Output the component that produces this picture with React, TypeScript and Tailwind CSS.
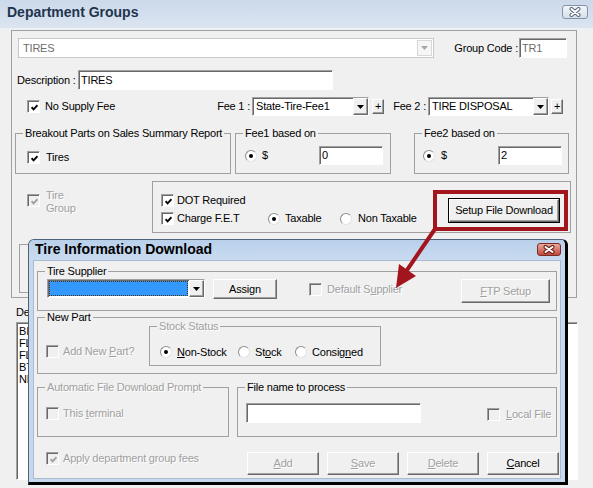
import React from 'react';

const sunken =
  'border border-t-[#a0a0a0] border-l-[#a0a0a0] border-r-white border-b-white shadow-[inset_1px_1px_0_#696969]';
const raised =
  'border border-t-white border-l-white border-r-[#696969] border-b-[#696969] shadow-[inset_-1px_-1px_0_#a0a0a0] bg-[#f0f0f0]';
const dim = 'text-[#a0a0a0] [text-shadow:1px_1px_0_#ffffff]';
const red = '#a3151d';

function Tick({ color }: { color: string }) {
  return (
    <svg width="7" height="7" viewBox="0 0 7 7">
      <path d="M0.6 3.2L2.6 5.3L6.5 1.2" stroke={color} strokeWidth="1.9" fill="none" />
    </svg>
  );
}

function Check({ checked, disabled }: { checked?: boolean; disabled?: boolean }) {
  return (
    <span
      className={`flex h-[13px] w-[13px] shrink-0 items-center justify-center pl-[1px] pt-[1px] ${sunken} ${
        disabled ? 'bg-[#f0f0f0]' : 'bg-white'
      }`}
    >
      {checked && <Tick color={disabled ? '#a0a0a0' : '#000'} />}
    </span>
  );
}

function Radio({ on }: { on?: boolean }) {
  return (
    <span className="flex h-[12px] w-[12px] shrink-0 items-center justify-center rounded-full border border-[#8c8c8c] border-r-[#e2e2e2] border-b-[#e2e2e2] bg-white">
      {on && <span className="h-[4px] w-[4px] rounded-full bg-black" />}
    </span>
  );
}

function Tri({ color }: { color: string }) {
  return (
    <svg width="7" height="4" viewBox="0 0 7 4">
      <polygon points="0,0 7,0 3.5,4" fill={color} />
    </svg>
  );
}

function Combo({ text, className = '' }: { text: string; className?: string }) {
  return (
    <div className={`flex h-[19px] bg-white ${sunken} ${className}`}>
      <span className="flex-1 overflow-hidden whitespace-nowrap pl-[3px] leading-[17px]">{text}</span>
      <span className={`flex w-[15px] items-center justify-center ${raised}`}>
        <Tri color="#000" />
      </span>
    </div>
  );
}

function Plus({ className = '' }: { className?: string }) {
  return (
    <span className={`flex h-[15px] w-[12px] items-center justify-center leading-[13px] ${raised} ${className}`}>+</span>
  );
}

function Btn({
  children,
  className = '',
  disabled,
}: {
  children: React.ReactNode;
  className?: string;
  disabled?: boolean;
}) {
  return (
    <div className={`flex items-center justify-center ${raised} ${disabled ? dim : ''} ${className}`}>{children}</div>
  );
}

function Group({
  label,
  dimLabel,
  className = '',
  children,
}: {
  label?: string;
  dimLabel?: boolean;
  className?: string;
  children?: React.ReactNode;
}) {
  return (
    <fieldset className={`border border-[#a0a0a0] ${className}`}>
      {label && <legend className={`ml-[7px] px-[2px] leading-[13px] ${dimLabel ? dim : ''}`}>{label}</legend>}
      {children}
    </fieldset>
  );
}

function XGlyph({ edge, w = 14, h = 10 }: { edge: string; w?: number; h?: number }) {
  const d = `M3.5 2L${w - 3.5} ${h - 2}M${w - 3.5} 2L3.5 ${h - 2}`;
  return (
    <svg width={w} height={h} viewBox={`0 0 ${w} ${h}`}>
      <path d={d} stroke={edge} strokeWidth="4" strokeLinecap="round" />
      <path d={d} stroke="#ffffff" strokeWidth="2" strokeLinecap="round" />
    </svg>
  );
}

const U = ({ children }: { children: React.ReactNode }) => <span className="underline">{children}</span>;

// only the first letters peek out from under the download window
const listItems = ['BIG O TIRES', 'FLAT REPAIR', 'FLEET TIRES', 'BTR TUBES', 'NEW TIRES'];

export default function App() {
  return (
    <div className="relative h-[488px] w-[593px] overflow-hidden bg-[#f0f0f0] font-['Liberation_Sans',Arial,sans-serif] text-[11px] leading-[13px] tracking-[-0.2px] text-black">
      {/* title bar */}
      <div className="flex h-[28px] items-start justify-between bg-gradient-to-b from-[#ccd9ea] to-[#dbe5f1] pl-[7px] pr-[5px]">
        <span className="pt-[4px] text-[14px] font-bold leading-[16px] tracking-normal text-[#1f344e]">
          Department Groups
        </span>
        <span className="mt-[5px] flex h-[14px] w-[26px] items-center justify-center rounded-[3px] border border-[#8494a7] bg-gradient-to-b from-[#f3f6fa] to-[#d6dfe9]">
          <XGlyph edge="#5a6776" />
        </span>
      </div>

      {/* main panel */}
      <div className="ml-[11px] mt-[2px] h-[268px] w-[566px] border border-[#a0a0a0]">
        <div className="mt-[7px] flex h-[20px] items-center">
          <div className="ml-[6px] flex h-[20px] w-[416px] border border-[#c8c8c8] bg-white">
            <span className="flex-1 pl-[4px] leading-[18px] text-[#6d6d6d]">TIRES</span>
            <span className="m-[1px] flex w-[15px] items-center justify-center border border-[#d8d8d8] bg-[#f6f6f6]">
              <Tri color="#a8a8a8" />
            </span>
          </div>
          <span className="w-[85px] whitespace-nowrap pr-[1px] text-right">Group Code :</span>
          <div className={`h-[20px] w-[48px] bg-white pl-[2px] leading-[18px] text-[#6d6d6d] ${sunken}`}>TR1</div>
        </div>

        <div className="mt-[12px] flex h-[20px] items-center">
          <span className="ml-[5px] w-[61px] whitespace-nowrap">Description :</span>
          <div className={`h-[20px] w-[255px] bg-white pl-[2px] leading-[18px] ${sunken}`}>TIRES</div>
        </div>

        <div className="mt-[7px] flex h-[19px] items-center">
          <div className="flex w-[188px] items-center pl-[15px]">
            <Check checked />
            <span className="ml-[5px]">No Supply Fee</span>
          </div>
          <span className="w-[50px] whitespace-nowrap text-right">Fee 1 :</span>
          <Combo className="ml-[2px] w-[117px]" text="State-Tire-Fee1" />
          <Plus className="ml-[3px]" />
          <span className="w-[42px] whitespace-nowrap text-right">Fee 2 :</span>
          <Combo className="ml-[2px] w-[121px]" text="TIRE DISPOSAL" />
          <Plus className="ml-[2px]" />
        </div>

        <div className="mt-[11px] flex h-[47px]">
          <Group label="Breakout Parts on Sales Summary Report" className="ml-[3px] h-[47px] w-[216px]">
            <div className="mt-[11px] flex items-center pl-[11px]">
              <Check checked />
              <span className="ml-[6px]">Tires</span>
            </div>
          </Group>
          <Group label="Fee1 based on" className="ml-[4px] h-[47px] w-[156px]">
            <div className="mt-[6px] flex h-[19px] items-center pl-[9px] pr-[7px]">
              <Radio on />
              <span className="ml-[5px]">$</span>
              <div className={`ml-auto h-[19px] w-[64px] bg-white pl-[2px] leading-[17px] ${sunken}`}>0</div>
            </div>
          </Group>
          <Group label="Fee2 based on" className="ml-[23px] h-[47px] w-[155px]">
            <div className="mt-[6px] flex h-[19px] items-center pl-[8px] pr-[6px]">
              <Radio on />
              <span className="ml-[6px]">$</span>
              <div className={`ml-auto h-[19px] w-[64px] bg-white pl-[2px] leading-[17px] ${sunken}`}>2</div>
            </div>
          </Group>
        </div>

        <div className="mt-[7px] flex h-[52px]">
          <div className="flex w-[140px] items-start pl-[15px]">
            <span className="mt-[13px]">
              <Check checked disabled />
            </span>
            <span className={`ml-[6px] mt-[8px] ${dim}`}>
              Tire
              <br />
              Group
            </span>
          </div>
          <div className="flex h-[52px] w-[419px] border border-[#a0a0a0]">
            <div className="pl-[8px] pt-[12px]">
              <div className="flex h-[13px] items-center">
                <Check checked />
                <span className="ml-[3px]">DOT Required</span>
              </div>
              <div className="mt-[5px] flex h-[13px] items-center">
                <div className="flex w-[107px] items-center">
                  <Check checked />
                  <span className="ml-[3px]">Charge F.E.T</span>
                </div>
                <div className="flex w-[72px] items-center">
                  <Radio on />
                  <span className="ml-[5px]">Taxable</span>
                </div>
                <div className="flex items-center">
                  <Radio />
                  <span className="ml-[6px] whitespace-nowrap">Non Taxable</span>
                </div>
              </div>
            </div>
            <div className="ml-auto mr-[10px] mt-[16px] h-[25px] w-[112px] border border-black">
              <Btn className="h-full w-full">Setup File Download</Btn>
            </div>
          </div>
        </div>

        <div className="ml-[7px] mt-[11px] h-[49px] w-[545px] border border-[#a0a0a0]" />
      </div>

      <div className="ml-[16px] mt-[8px] w-[12px] overflow-hidden whitespace-nowrap">Departments</div>
      <div className={`ml-[16px] mt-[3px] h-[158px] w-[562px] bg-white pl-[2px] pt-[2px] leading-[12px] ${sunken}`}>
        <div className="w-[9px] overflow-hidden whitespace-nowrap">
          {listItems.map((item) => (
            <div key={item}>{item}</div>
          ))}
        </div>
      </div>

      {/* annotation box */}
      <div className="absolute left-[433px] top-[190px] h-[41px] w-[135px] border-4 border-[#a3151d]" />

      {/* Tire Information Download window */}
      <div className="absolute left-[28px] top-[239px] flex h-[246px] w-[540px] flex-col rounded-t-[6px] border-l border-t border-l-[#4e6079] border-t-[#4e6079] border-r-[3px] border-b-[3px] border-r-black border-b-black bg-[#c5d8ee]">
        <div className="flex h-[20px] shrink-0 items-start justify-between rounded-t-[5px] bg-gradient-to-b from-[#b9d0eb] to-[#c9dbf0] pl-[6px] pr-[4px]">
          <span className="pt-[1px] text-[14px] font-bold leading-[16px] tracking-normal">Tire Information Download</span>
          <span className="mt-[3px] flex h-[13px] w-[24px] items-center justify-center rounded-[3px] border border-[#7a2c25] bg-gradient-to-b from-[#e8a99c] to-[#c2463a]">
            <XGlyph edge="#6b211b" w={14} h={9} />
          </span>
        </div>
        <div className="mx-[4px] mb-[3px] flex-1 border border-[#a9bbd1] bg-[#f0f0f0]">
          <Group label="Tire Supplier" className="ml-[3px] mt-[4px] h-[46px] w-[520px]">
            <div className="flex items-start pl-[9px]">
              <div className={`mt-[1px] flex h-[19px] w-[158px] bg-white ${sunken}`}>
                <span className="m-[1px] flex-1 border border-dotted border-[#4a3414] bg-[#3399ff]" />
                <span className={`flex w-[15px] items-center justify-center ${raised}`}>
                  <Tri color="#000" />
                </span>
              </div>
              <Btn className="ml-[8px] mt-[1px] h-[20px] w-[64px]">
                Assi<U>g</U>n
              </Btn>
              <div className="ml-[32px] mt-[5px] flex items-center">
                <Check disabled />
                <span className={`ml-[5px] ${dim}`}>
                  Default S<U>u</U>pplier
                </span>
              </div>
              <Btn disabled className="ml-auto mr-[6px] mt-[1px] h-[24px] w-[89px]">
                <U>F</U>TP Setup
              </Btn>
            </div>
          </Group>

          <Group label="New Part" className="ml-[3px] h-[63px] w-[520px]">
            <div className="flex items-start">
              <div className="mt-[21px] flex w-[111px] items-center pl-[8px]">
                <Check disabled />
                <span className={`ml-[4px] whitespace-nowrap ${dim}`}>
                  Add New <U>P</U>art?
                </span>
              </div>
              <Group label="Stock Status" dimLabel className="-mt-[4px] h-[46px] w-[232px]">
                <div className="mt-[13px] flex h-[12px] items-center pl-[10px]">
                  <div className="flex w-[78px] items-center">
                    <Radio on />
                    <span className="ml-[5px]">
                      <U>N</U>on-Stock
                    </span>
                  </div>
                  <div className="flex w-[57px] items-center">
                    <Radio />
                    <span className="ml-[5px]">
                      St<U>o</U>ck
                    </span>
                  </div>
                  <div className="flex items-center">
                    <Radio />
                    <span className="ml-[5px]">
                      Consig<U>n</U>ed
                    </span>
                  </div>
                </div>
              </Group>
            </div>
          </Group>

          <div className="mt-[7px] flex h-[56px]">
            <Group label="Automatic File Download Prompt" dimLabel className="ml-[3px] h-[56px] w-[192px]">
              <div className="mt-[13px] flex items-center pl-[8px]">
                <Check disabled />
                <span className={`ml-[4px] ${dim}`}>
                  This <U>t</U>erminal
                </span>
              </div>
            </Group>
            <Group label="File name to process" className="ml-[8px] h-[56px] w-[320px]">
              <div className="flex items-start pl-[8px]">
                <div className={`mt-[9px] h-[20px] w-[175px] bg-white ${sunken}`} />
                <div className="ml-[66px] mt-[14px] flex items-center">
                  <Check disabled />
                  <span className={`ml-[6px] ${dim}`}>
                    <U>L</U>ocal File
                  </span>
                </div>
              </div>
            </Group>
          </div>

          <div className="mt-[15px] flex items-start">
            <div className="ml-[12px] flex w-[201px] items-center">
              <Check checked disabled />
              <span className={`ml-[4px] whitespace-nowrap ${dim}`}>Apply department group fees</span>
            </div>
            <Btn disabled className="h-[23px] w-[72px]">
              <U>A</U>dd
            </Btn>
            <Btn disabled className="ml-[8px] h-[23px] w-[72px]">
              <U>S</U>ave
            </Btn>
            <Btn disabled className="ml-[8px] h-[23px] w-[72px]">
              <U>D</U>elete
            </Btn>
            <Btn className="ml-[8px] h-[23px] w-[72px]">
              <U>C</U>ancel
            </Btn>
          </div>
        </div>
      </div>

      {/* annotation arrow */}
      <svg className="pointer-events-none absolute left-0 top-0" width="593" height="488" viewBox="0 0 593 488">
        <line x1="435" y1="229" x2="405" y2="273" stroke={red} strokeWidth="4" />
        <polygon points="396,288 416,276 399,264" fill={red} />
      </svg>
    </div>
  );
}
